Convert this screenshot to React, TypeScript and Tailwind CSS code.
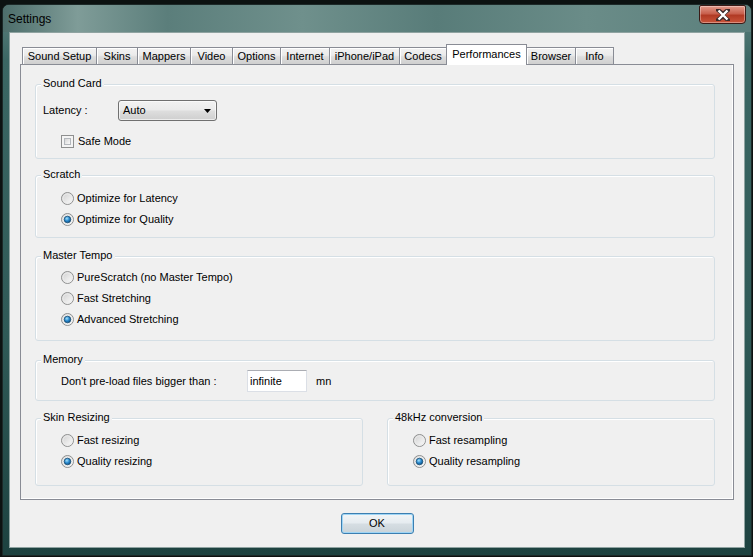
import type { ReactNode } from 'react';

const TABS = [
  { label: 'Sound Setup', w: 75 },
  { label: 'Skins', w: 42 },
  { label: 'Mappers', w: 54 },
  { label: 'Video', w: 43 },
  { label: 'Options', w: 49 },
  { label: 'Internet', w: 50 },
  { label: 'iPhone/iPad', w: 71 },
  { label: 'Codecs', w: 48 },
  { label: 'Performances', w: 81, active: true },
  { label: 'Browser', w: 50 },
  { label: 'Info', w: 39 },
];

function Radio({ checked = false }: { checked?: boolean }) {
  return (
    <svg width="13" height="13" viewBox="0 0 13 13" className="shrink-0">
      <circle cx="6.5" cy="6.5" r="6" fill="url(#radioBg)" stroke="#8e8f8f" />
      <circle cx="6.5" cy="6.5" r="4.6" fill="none" stroke="#ececec" />
      {checked && <circle cx="6.5" cy="6.5" r="3.3" fill="url(#radioDot)" stroke="#1b4f75" strokeWidth="0.8" />}
    </svg>
  );
}

function Checkbox() {
  return (
    <div className="w-[13px] h-[13px] shrink-0 border border-[#8e8f8f] bg-[#f4f4f4] p-[2px]">
      <div className="w-full h-full border border-[#b4b8bd] bg-[linear-gradient(135deg,#d6d6d6,#fafafa)]" />
    </div>
  );
}

function Group({ title, className, children }: { title: string; className: string; children: ReactNode }) {
  return (
    <div className={`relative border border-[#d5dfe5] rounded-[3px] shadow-[inset_1px_1px_0_#fff] ${className}`}>
      <span className="absolute -top-[8px] left-[5px] px-[2px] leading-[13px] bg-[#f0f0f0]">{title}</span>
      {children}
    </div>
  );
}

function RadioRow({ label, checked }: { label: string; checked?: boolean }) {
  return (
    <div className="h-[21px] flex items-center gap-[3px] pl-[25px]">
      <Radio checked={checked} />
      <span>{label}</span>
    </div>
  );
}

export default function App() {
  return (
    <div className="w-[753px] h-[557px] overflow-hidden bg-[#0c1211] pl-[2px] pt-[4px] font-['Liberation_Sans',Arial,sans-serif] text-[11px] text-black">
      <svg width="0" height="0" className="absolute">
        <defs>
          <linearGradient id="radioBg" x1="0" y1="0" x2="1" y2="1">
            <stop offset="0" stopColor="#cdcdcd" />
            <stop offset="1" stopColor="#ffffff" />
          </linearGradient>
          <radialGradient id="radioDot" cx="0.4" cy="0.35" r="0.7">
            <stop offset="0" stopColor="#a6e3fb" />
            <stop offset="0.5" stopColor="#2a8ad0" />
            <stop offset="1" stopColor="#0a4a7c" />
          </radialGradient>
        </defs>
      </svg>

      <div className="w-[750px] h-[552px] flex flex-col rounded-t-[7px] border border-[#1c2928] bg-[linear-gradient(180deg,#5f817e_0%,#3b6764_10%,#2f5a57_60%,#1d4240_100%)]">
        {/* title bar */}
        <div className="relative h-[27px] shrink-0 rounded-t-[6px] flex items-center pl-[5px] pt-[1px] bg-[linear-gradient(90deg,#4d6e6b_0%,#7f9c98_10%,#5b7e7b_22%,#6f908c_40%,#587c79_58%,#6a8c88_78%,#5b7f7c_100%)]">
          <span className="text-[12px] text-black">Settings</span>
          <div className="absolute top-0 right-[5px] w-[47px] h-[19px] rounded-b-[4px] rounded-t-[2px] border border-[#3a1a16] bg-[linear-gradient(180deg,#e29a8a_0%,#c8604d_45%,#b13a24_55%,#c9553b_100%)] flex items-center justify-center shadow-[inset_0_0_0_1px_rgba(255,255,255,0.35)]">
            <svg width="14" height="12" viewBox="0 0 14 12">
              <path d="M2 1 L7 5 L12 1 M2 11 L7 7 L12 11" fill="none" stroke="#3b2a2a" strokeWidth="4.2" strokeLinecap="square" />
              <path d="M2.5 1.5 L11.5 10.5 M11.5 1.5 L2.5 10.5" fill="none" stroke="#ffffff" strokeWidth="2.4" />
            </svg>
          </div>
        </div>

        {/* client */}
        <div className="flex-1 px-[6px] pb-[7px] flex">
          <div className="flex-1 flex flex-col border border-[#8fa3a1] bg-[#f0f0f0] pt-[11px] pl-[10px]">
            {/* tabs */}
            <div className="flex items-end h-[20px] ml-[2px] relative z-10">
              {TABS.map((t, i) =>
                t.active ? (
                  <div
                    key={t.label}
                    style={{ width: t.w }}
                    className={`h-[21px] -mb-px bg-white border border-b-0 border-[#898c95] flex items-center justify-center pb-[1px] ${i ? '-ml-px' : ''}`}
                  >
                    {t.label}
                  </div>
                ) : (
                  <div
                    key={t.label}
                    style={{ width: t.w }}
                    className={`h-[17px] border border-b-0 border-[#898c95] bg-[linear-gradient(180deg,#f2f2f2_0%,#ebebeb_45%,#dddddd_55%,#cfcfcf_100%)] shadow-[inset_1px_1px_0_#fff] flex items-center justify-center ${i ? '-ml-px' : ''}`}
                  >
                    {t.label}
                  </div>
                ),
              )}
            </div>

            {/* panel */}
            <div className="w-[714px] h-[436px] border border-[#898c95] bg-[#f0f0f0] shadow-[inset_-1px_-1px_0_#fff] pl-[14px] pt-[19px] flex flex-col">
              <Group title="Sound Card" className="w-[680px] h-[75px] pt-[15px]">
                <div className="h-[21px] flex items-center pl-[7px]">
                  <span className="w-[75px]">Latency :</span>
                  <div className="w-[99px] h-[21px] rounded-[3px] border border-[#707070] bg-[linear-gradient(180deg,#f2f2f2_0%,#ebebeb_45%,#dddddd_55%,#cfcfcf_100%)] shadow-[inset_0_0_0_1px_rgba(255,255,255,0.6)] flex items-center justify-between pl-[4px] pr-[5px]">
                    <span>Auto</span>
                    <svg width="7" height="4" viewBox="0 0 7 4">
                      <path d="M0 0 H7 L3.5 4 Z" fill="#000" />
                    </svg>
                  </div>
                </div>
                <div className="h-[21px] mt-[10px] flex items-center gap-[4px] pl-[25px]">
                  <Checkbox />
                  <span>Safe Mode</span>
                </div>
              </Group>

              <Group title="Scratch" className="w-[680px] h-[63px] mt-[16px] pt-[12px]">
                <RadioRow label="Optimize for Latency" />
                <RadioRow label="Optimize for Quality" checked />
              </Group>

              <Group title="Master Tempo" className="w-[680px] h-[85px] mt-[18px] pt-[10px]">
                <RadioRow label="PureScratch (no Master Tempo)" />
                <RadioRow label="Fast Stretching" />
                <RadioRow label="Advanced Stretching" checked />
              </Group>

              <Group title="Memory" className="w-[680px] h-[41px] mt-[19px] pt-[9px]">
                <div className="h-[22px] flex items-center pl-[25px]">
                  <span className="w-[186px]">Don't pre-load files bigger than :</span>
                  <div className="w-[60px] h-[22px] bg-white border border-[#dbdfe6] border-t-[#abadb3] flex items-center pl-[2px]">
                    infinite
                  </div>
                  <span className="ml-[9px]">mn</span>
                </div>
              </Group>

              <div className="flex gap-[24px] mt-[17px]">
                <Group title="Skin Resizing" className="w-[328px] h-[68px] pt-[11px]">
                  <RadioRow label="Fast resizing" />
                  <RadioRow label="Quality resizing" checked />
                </Group>
                <Group title="48kHz conversion" className="w-[328px] h-[68px] pt-[11px]">
                  <RadioRow label="Fast resampling" />
                  <RadioRow label="Quality resampling" checked />
                </Group>
              </div>
            </div>

            {/* OK */}
            <div className="flex justify-center pr-[10px] mt-[13px]">
              <button className="w-[73px] h-[21px] rounded-[3px] border border-[#3c7fb1] bg-[linear-gradient(180deg,#f2f5f7_0%,#e6ecf0_45%,#d5dde2_55%,#c9d3d9_100%)] shadow-[inset_0_0_0_1px_#9fd5f5] text-[11px]">
                OK
              </button>
            </div>
          </div>
        </div>
      </div>
    </div>
  );
}
